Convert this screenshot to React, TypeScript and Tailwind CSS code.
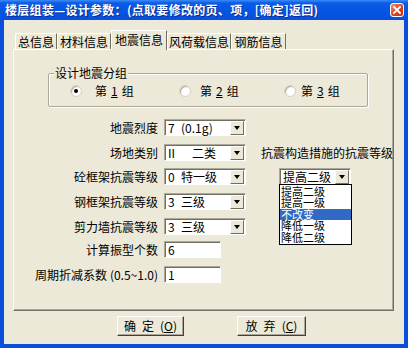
import React from "react";

const Sel = ({ a, b, aw = 13, w = 82 }: { a: string; b?: string; aw?: number; w?: number }) => (
  <div
    className="h-[17px] bg-white flex items-center border border-t-[#ACA899] border-l-[#ACA899] border-r-white border-b-white shadow-[inset_1px_1px_0_#716F64]"
    style={{ width: w }}
  >
    <div className="flex-1 flex pl-[3px] pt-[1px] text-[12px] leading-[12px] whitespace-nowrap text-black">
      <span style={{ width: b ? aw : undefined }}>{a}</span>
      {b && <span>{b}</span>}
    </div>
    <div className="w-[14px] h-[14px] mr-[1px] bg-[#ECE9D8] border border-t-white border-l-white border-r-[#716F64] border-b-[#716F64] flex items-center justify-center">
      <div className="w-0 h-0 border-l-[3.5px] border-r-[3.5px] border-t-[4px] border-l-transparent border-r-transparent border-t-black" />
    </div>
  </div>
);

const Inp = ({ text }: { text: string }) => (
  <div className="w-[57px] h-[17px] bg-white border border-t-[#ACA899] border-l-[#ACA899] border-r-white border-b-white shadow-[inset_1px_1px_0_#716F64] pl-[3px] pt-[1px] text-[12px] leading-[14px]">
    {text}
  </div>
);

const Radio = ({ on }: { on?: boolean }) => (
  <div className="w-[12px] h-[12px] shrink-0 rounded-full bg-white border border-[#D4D0C8] shadow-[inset_1px_1px_1px_#ACA899] flex items-center justify-center">
    {on && <div className="w-[4px] h-[4px] rounded-full bg-black" />}
  </div>
);

const RLabel = ({ n }: { n: string }) => (
  <div className="w-[39px] flex items-center whitespace-nowrap">
    <span>第</span>
    <span className="ml-[4px] underline">{n}</span>
    <span className="ml-[4px]">组</span>
  </div>
);

export default function App() {
  const tabs = [
    { t: "总信息", w: 42 },
    { t: "材料信息", w: 54 },
    { t: "地震信息", w: 56, sel: true },
    { t: "风荷载信息", w: 64 },
    { t: "钢筋信息", w: 55 },
  ];
  const rows: { label: React.ReactNode; key: string; ctrl: React.ReactNode; mt: number; extra?: React.ReactNode }[] = [
    { key: "1", label: "地震烈度", ctrl: <Sel a="7" b="(0.1g)" />, mt: 0 },
    {
      key: "2",
      label: "场地类别",
      ctrl: <Sel a="II" b="二类" aw={24} />,
      mt: 8,
      extra: <div className="ml-[15px] text-[12px] leading-[17px] whitespace-nowrap">抗震构造措施的抗震等级</div>,
    },
    {
      key: "3",
      label: "砼框架抗震等级",
      ctrl: <Sel a="0" b="特一级" />,
      mt: 7,
      extra: (
        <div className="ml-[33px] relative">
          <Sel a="提高二级" w={72} />
          <div className="absolute left-0 top-[16px] w-[73px] bg-white border border-black z-10 text-[11px] py-[1px]">
            {["提高二级", "提高一级", "不改变", "降低一级", "降低二级"].map((s, i) => (
              <div
                key={s}
                className={`h-[11.4px] leading-[11px] pl-[1px] whitespace-nowrap ${
                  i === 2 ? "bg-[#316AC5] text-white" : "text-black"
                }`}
              >
                {s}
              </div>
            ))}
          </div>
        </div>
      ),
    },
    { key: "4", label: "钢框架抗震等级", ctrl: <Sel a="3" b="三级" />, mt: 8 },
    { key: "5", label: "剪力墙抗震等级", ctrl: <Sel a="3" b="三级" />, mt: 8 },
    { key: "6", label: "计算振型个数", ctrl: <Inp text="6" />, mt: 6 },
    {
      key: "7",
      label: (
        <>
          周期折减系数<span className="ml-[3px]">(0.5~1.0)</span>
        </>
      ),
      ctrl: <Inp text="1" />,
      mt: 8,
    },
  ];

  return (
    <div
      className="w-[408px] h-[348px] bg-[#0A4FDC] flex flex-col text-black"
      style={{ fontFamily: '"Noto Sans CJK SC", "Liberation Sans", sans-serif' }}
    >
      {/* title bar */}
      <div className="h-[20px] flex items-center pl-[5px] pr-[4px] bg-[linear-gradient(to_bottom,#3C8CF7_0px,#0A5BE8_3px,#0553E0_14px,#0A4FDC_20px)]">
        <div className="flex-1 text-white font-bold text-[12px] leading-[12px] whitespace-nowrap tracking-[0.3px] [text-shadow:1px_1px_0_#0A2A8C]">
          楼层组装—设计参数：(点取要修改的页、项，[确定]返回)
        </div>
        <div className="w-[14px] h-[14px] rounded-[3px] border border-white bg-[linear-gradient(135deg,#F08A6A,#D8401C_60%,#C23512)] flex items-center justify-center">
          <svg width="8" height="8" viewBox="0 0 8 8">
            <path d="M1 1 L7 7 M7 1 L1 7" stroke="white" strokeWidth="1.8" strokeLinecap="square" />
          </svg>
        </div>
      </div>
      {/* body */}
      <div className="flex-1 mx-[4px] mb-[4px] bg-[#ECE9D8] flex flex-col">
        {/* tabs */}
        <div className="flex items-end pl-[11px] h-[29px] relative z-10">
          {tabs.map((tb) => (
            <div
              key={tb.t}
              className={`flex items-center justify-center text-[12px] whitespace-nowrap border-l border-t border-r border-l-white border-t-white border-r-[#716F64] bg-[#ECE9D8] ${
                tb.sel ? "h-[20px] mb-[-1px] pb-[1px]" : "h-[16px]"
              }`}
              style={{ width: tb.w }}
            >
              {tb.t}
            </div>
          ))}
        </div>
        {/* panel */}
        <div className="ml-[9px] mr-[10px] h-[262px] border border-l-white border-t-white border-r-[#716F64] border-b-[#716F64] shadow-[inset_-1px_-1px_0_#ACA899] relative">
          {/* group box */}
          <div className="mt-[23px] ml-[34px] w-[320px] h-[34px] border border-[#ACA899] shadow-[1px_1px_0_white,inset_1px_1px_0_white] relative rounded-[2px]">
            <div className="absolute left-[5px] top-[-8px] bg-[#ECE9D8] px-[1px] text-[12px] leading-[14px]">设计地震分组</div>
            <div className="flex items-center h-full pt-[2px] text-[12px]">
              <div className="ml-[21px]"><Radio on /></div>
              <div className="ml-[13px]"><RLabel n="1" /></div>
              <div className="ml-[45px]"><Radio /></div>
              <div className="ml-[9px]"><RLabel n="2" /></div>
              <div className="ml-[45px]"><Radio /></div>
              <div className="ml-[5px]"><RLabel n="3" /></div>
            </div>
          </div>
          {/* form */}
          <div className="mt-[12px] flex flex-col">
            {rows.map((r) => (
              <div key={r.key} className="flex items-center h-[17px]" style={{ marginTop: r.mt }}>
                <div className="w-[150px] pr-[6px] text-right text-[12px] whitespace-nowrap">{r.label}</div>
                {r.ctrl}
                {r.extra}
              </div>
            ))}
          </div>
        </div>
        {/* buttons */}
        <div className="flex mt-[5px] pl-[113px]">
          <div className="w-[67px] h-[20px] border border-t-white border-l-white border-r-[#404040] border-b-[#404040] shadow-[inset_-1px_-1px_0_#ACA899] flex items-center justify-center text-[12px] whitespace-nowrap">
            <span>确</span>
            <span className="ml-[6px]">定</span>
            <span className="ml-[6px]">
              (<span className="underline">O</span>)
            </span>
          </div>
          <div className="ml-[53px] w-[69px] h-[20px] border border-t-white border-l-white border-r-[#404040] border-b-[#404040] shadow-[inset_-1px_-1px_0_#ACA899] flex items-center justify-center text-[12px] whitespace-nowrap">
            <span>放</span>
            <span className="ml-[6px]">弃</span>
            <span className="ml-[6px]">
              (<span className="underline">C</span>)
            </span>
          </div>
        </div>
      </div>
    </div>
  );
}
